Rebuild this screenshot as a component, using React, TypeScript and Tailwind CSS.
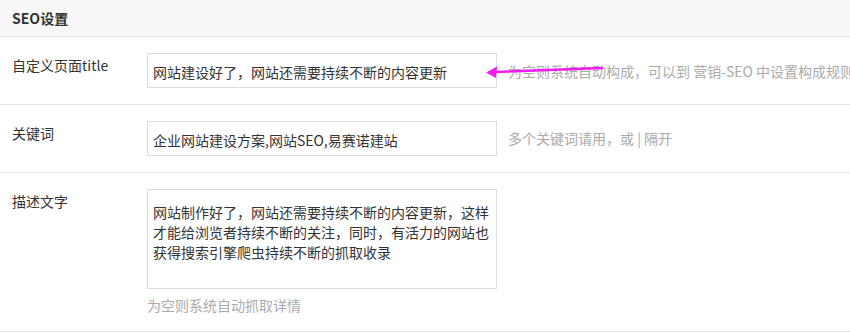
const font = { fontFamily: '"Noto Sans CJK SC", "Noto Sans", sans-serif' }

const FieldRow = ({
  label,
  children,
}: {
  label: string
  children: React.ReactNode
}) => (
  <div className="flex border-b border-[#e4e4e4]">
    <div className="w-[147px] shrink-0 pl-3 pt-[18px] text-[14px] leading-5 text-[#333]">{label}</div>
    <div className="flex-1 py-4">{children}</div>
  </div>
)

export default function App() {
  return (
    <div className="relative w-[850px] h-[333px] overflow-hidden bg-white" style={font}>
      <div className="h-[37px] border-b border-[#e4e4e4] bg-[#f7f7f7] pl-3 text-[14px] font-bold leading-[36px] text-[#333]">
        SEO设置
      </div>

      <FieldRow label="自定义页面title">
        <div className="flex items-center gap-[11px] whitespace-nowrap">
          <input
            readOnly
            value="网站建设好了，网站还需要持续不断的内容更新"
            className="h-[35px] w-[350px] shrink-0 border border-[#dcdcdc] px-[5px] pt-[3px] text-[14px] text-[#333] outline-none"
            style={font}
          />
          <span className="pt-[1px] text-[14px] text-[#aaa]">为空则系统自动构成，可以到 营销-SEO 中设置构成规则</span>
        </div>
      </FieldRow>

      <FieldRow label="关键词">
        <div className="flex items-center gap-[11px] whitespace-nowrap">
          <input
            readOnly
            value="企业网站建设方案,网站SEO,易赛诺建站"
            className="h-[35px] w-[350px] shrink-0 border border-[#dcdcdc] px-[5px] pt-[3px] text-[14px] text-[#333] outline-none"
            style={font}
          />
          <span className="text-[14px] text-[#aaa]">多个关键词请用，或 | 隔开</span>
        </div>
      </FieldRow>

      <FieldRow label="描述文字">
        <textarea
          readOnly
          value="网站制作好了，网站还需要持续不断的内容更新，这样才能给浏览者持续不断的关注，同时，有活力的网站也获得搜索引擎爬虫持续不断的抓取收录"
          className="block h-[100px] w-[350px] resize-none overflow-hidden border border-[#dcdcdc] pl-[5px] pr-[4px] pt-3 text-[14px] leading-5 text-[#333] outline-none"
          style={font}
        />
        <div className="mt-[6px] pb-[-1px] text-[14px] leading-5 text-[#aaa]">为空则系统自动抓取详情</div>
      </FieldRow>

      {/* annotation arrow drawn over the screenshot */}
      <svg className="pointer-events-none absolute left-0 top-0" width="850" height="333">
        <line x1="602" y1="68" x2="494" y2="72" stroke="#f01cf0" strokeWidth="2.5" strokeLinecap="round" />
        <polygon points="486,72.5 497,66.5 496,78" fill="#f01cf0" />
      </svg>
    </div>
  )
}
